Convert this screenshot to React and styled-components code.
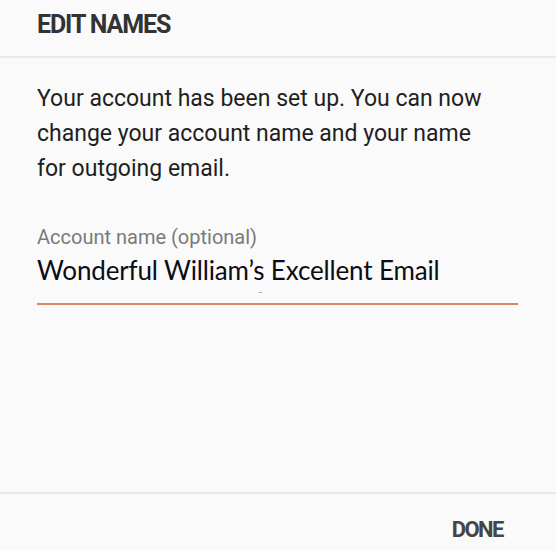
import React from 'react'
import styled, { createGlobalStyle } from 'styled-components'

const Global = createGlobalStyle`
  html, body {
    margin: 0;
    padding: 0;
    background: #fafafa;
  }
  body {
    font-family: Roboto, "Liberation Sans", sans-serif;
  }
`

const Dialog = styled.div`
  display: flex;
  flex-direction: column;
  height: 100vh;
  background: #fafafa;
`

const Header = styled.div`
  height: 58px;
  box-sizing: border-box;
  padding: 10px 37px 0;
  border-bottom: 2px solid #e9e9e9;
`

const Title = styled.h2`
  margin: 0;
  font-size: 25px;
  line-height: 30px;
  font-weight: 700;
  letter-spacing: -1.1px;
  color: #333;
`

const Body = styled.div`
  flex: 1;
  padding: 23px 38px 0 37px;
`

const Message = styled.p`
  margin: 0;
  max-width: 455px;
  font-size: 23px;
  line-height: 35px;
  color: #1f1f1f;
`

const Field = styled.div`
  margin-top: 40px;
  position: relative;
`

const Label = styled.div`
  font-size: 20px;
  line-height: 22px;
  color: #7a7a7a;
`

const Input = styled.div`
  margin-top: 6px;
  padding-bottom: 17px;
  border-bottom: 2px solid #da8462;
  font-family: Lato, "Open Sans", sans-serif;
  font-size: 26px;
  line-height: 32px;
  color: #0c0c14;
  letter-spacing: -0.15px;
`

const Caret = styled.span`
  position: absolute;
  left: 222px;
  bottom: 12px;
  width: 3px;
  height: 1px;
  background: #e0a080;
`

const Footer = styled.div`
  height: 59px;
  box-sizing: border-box;
  border-top: 2px solid #e9e9e9;
  display: flex;
  justify-content: flex-end;
  padding: 21px 53px 0 0;
`

const Action = styled.button`
  border: 0;
  background: none;
  padding: 0;
  font-family: Roboto, "Liberation Sans", sans-serif;
  font-size: 22px;
  line-height: 30px;
  height: 30px;
  font-weight: 700;
  letter-spacing: -1.5px;
  color: #454545;
`

export default function App() {
  return (
    <Dialog>
      <Global />
      <Header>
        <Title>EDIT NAMES</Title>
      </Header>
      <Body>
        <Message>
          Your account has been set up. You can now change your account name and your name for outgoing email.
        </Message>
        <Field>
          <Label>Account name (optional)</Label>
          <Input>Wonderful William’s Excellent Email</Input>
          <Caret />
        </Field>
      </Body>
      <Footer>
        <Action>DONE</Action>
      </Footer>
    </Dialog>
  )
}
